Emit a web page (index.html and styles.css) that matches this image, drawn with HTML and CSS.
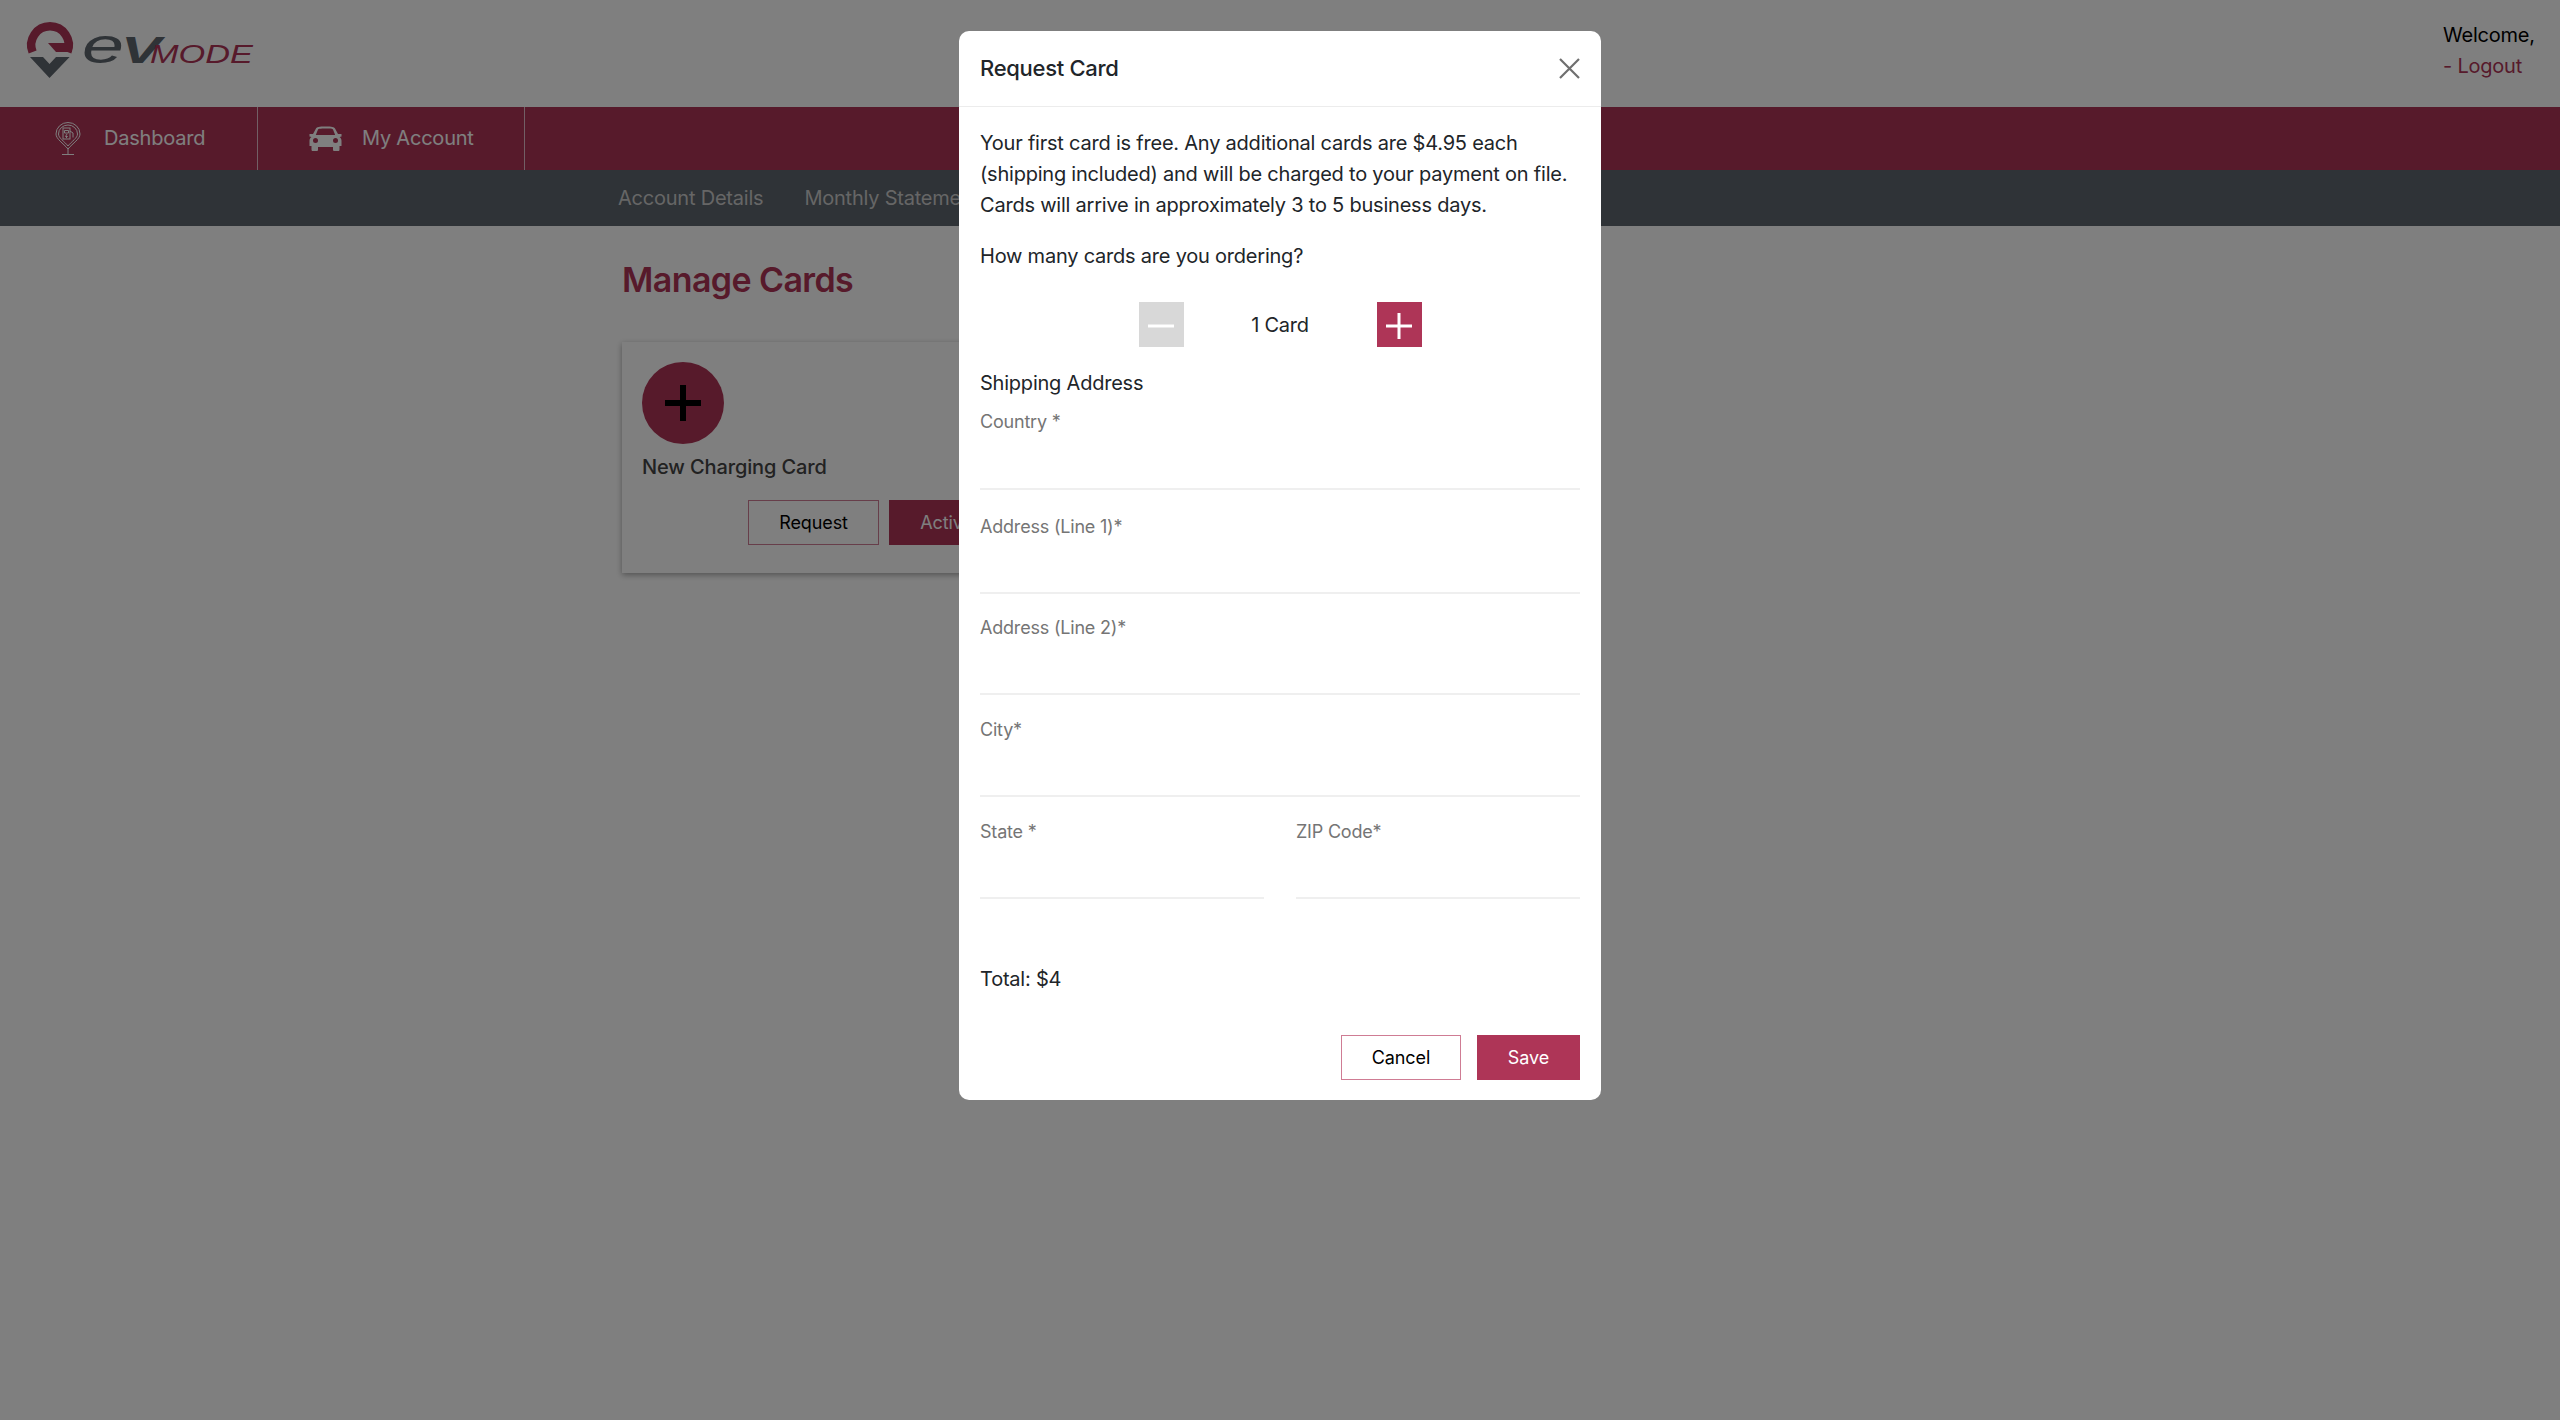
FILE: index.html
```html
<!DOCTYPE html>
<html lang="en">
<head>
<meta charset="utf-8">
<title>Manage Cards</title>
<link rel="stylesheet" href="styles.css">
</head>
<body>
<header class="topbar">
  <svg class="logo" width="230" height="60" viewBox="0 0 230 60" aria-label="EVmode">
    <path d="M5.600 30A18.750 18.750 0 1 1 40.400 30" fill="none" stroke="#ae3557" stroke-width="8.500"/>
    <path d="M21 21H45V30H29Z" fill="#ae3557"/>
    <path d="M3 35H16L22.500 42L29 35H42.600L22.500 56Z" fill="#5e666e"/>
    <text class="logo-e" x="55" y="41" textLength="42" lengthAdjust="spacingAndGlyphs">e</text>
    <text class="logo-v" x="94" y="41" textLength="40" lengthAdjust="spacingAndGlyphs">V</text>
    <text class="logo-mode" x="123" y="41" textLength="103" lengthAdjust="spacingAndGlyphs">mode</text>
  </svg>
  <div class="welcome">
    <div>Welcome,</div>
    <div class="logout">- Logout</div>
  </div>
</header>

<nav class="mainnav">
  <a class="mainnav-item item-dash">
    <svg width="26" height="33" viewBox="0 0 26 33" fill="none" stroke="#fff" stroke-width="1">
      <path d="M13 27C8 21 1 17 1 12A12 11.500 0 0 1 25 12C25 17 18 21 13 27Z"/>
      <path d="M13 24C9 19 3.500 16 3.500 12A9.500 9 0 0 1 22.500 12C22.500 16 17 19 13 24Z"/>
      <path d="M13 27V32M7 32.500H19"/>
      <rect x="8" y="6" width="7" height="11"/>
      <path d="M9.500 8.500H13.500V11H9.500ZM12 12L10.500 14.500H12.500L11 16M15 9L18 11V15.500"/>
    </svg>
    <span>Dashboard</span>
  </a>
  <a class="mainnav-item item-account">
    <svg width="33" height="25" viewBox="0 0 33 25" fill="#fff">
      <path d="M7 2.500C8 1 10 .5 16.500 .5S25 1 26 2.500L29 8H32.500V10.500L30.500 11C32 12 32.500 13 32.500 15V20H30.500V23.500C30.500 24.500 30 25 29 25H25.500C24.500 25 24 24.500 24 23.500V21H9V23.500C9 24.500 8.500 25 7.500 25H4C3 25 2.500 24.500 2.500 23.500V20H.5V15C.5 13 1 12 2.500 11L.5 10.500V8H4ZM9 3.500L6.800 9H26.200L24 3.500C23.500 2.800 22 2.500 16.500 2.500S9.500 2.800 9 3.500Z" fill-rule="evenodd"/>
      <circle cx="6.500" cy="14.500" r="2.500" fill="#ae3557"/>
      <circle cx="26.500" cy="14.500" r="2.500" fill="#ae3557"/>
    </svg>
    <span>My Account</span>
  </a>
</nav>

<nav class="subnav">
  <div class="subnav-inner">
    <a>Account Details</a>
    <a>Monthly Statements</a>
  </div>
</nav>

<main class="content">
  <h1 class="page-title">Manage Cards</h1>
  <section class="card">
    <div class="card-add">
      <svg width="36" height="36" viewBox="0 0 36 36"><path d="M18 0V36M0 18H36" stroke="#000" stroke-width="6"/></svg>
    </div>
    <div class="card-title">New Charging Card</div>
    <div class="card-actions">
      <button class="btn btn-outline btn-wide">Request</button>
      <button class="btn btn-fill btn-wide">Activate</button>
    </div>
  </section>
</main>

<div class="overlay">
  <div class="modal">
    <div class="modal-head">
      <span class="modal-title">Request Card</span>
      <svg width="21" height="21" viewBox="0 0 21 21"><path d="M1 1L20 20M20 1L1 20" stroke="#6f6f6f" stroke-width="2.200"/></svg>
    </div>
    <div class="modal-body">
      <p class="copy">Your first card is free. Any additional cards are $4.95 each (shipping included) and will be charged to your payment on file. Cards will arrive in approximately 3 to 5 business days.</p>
      <p class="question">How many cards are you ordering?</p>
      <div class="stepper">
        <span class="step step-off"><svg width="26" height="26" viewBox="0 0 26 26"><path d="M0 13H26" stroke="#fff" stroke-width="3"/></svg></span>
        <span class="step-count">1 Card</span>
        <span class="step step-on"><svg width="26" height="26" viewBox="0 0 26 26"><path d="M13 0V26M0 13H26" stroke="#fff" stroke-width="3"/></svg></span>
      </div>
      <div class="section-label">Shipping Address</div>
      <div class="field field-first"><label>Country *</label></div>
      <div class="field field-second"><label>Address (Line 1)*</label></div>
      <div class="field"><label>Address (Line 2)*</label></div>
      <div class="field"><label>City*</label></div>
      <div class="field-row">
        <div class="field"><label>State *</label></div>
        <div class="field"><label>ZIP Code*</label></div>
      </div>
      <div class="total">Total: $4</div>
      <div class="modal-actions">
        <button class="btn btn-outline btn-cancel">Cancel</button>
        <button class="btn btn-fill">Save</button>
      </div>
    </div>
  </div>
</div>
</body>
</html>
```

FILE: styles.css
```css
* { box-sizing: border-box; }
html, body { height: 100%; }
body {
  margin: 0;
  background: #fff;
  color: #000;
  font-family: Inter, "Liberation Sans", sans-serif;
  font-size: 20px;
  line-height: 31px;
  letter-spacing: -0.22px;
}
p { margin: 0; }

.topbar {
  height: 107px;
  display: flex;
  justify-content: space-between;
  padding: 22px 20px 0 27px;
}
.logo { display: block; overflow: visible; }
.logo text { letter-spacing: 0; }
.logo-e { font: italic 400 50px "Liberation Sans", sans-serif; fill: #5e666e; }
.logo-v { font: italic 700 36px "Liberation Sans", sans-serif; fill: #5e666e; }
.logo-mode { font: italic 400 25px "Liberation Sans", sans-serif; fill: #ae3557; text-transform: uppercase; }
.welcome { width: 97px; margin-top: -2px; }
.logout { color: #ae3557; }

.mainnav {
  height: 63px;
  background: #ae3557;
  display: flex;
  color: #fff;
}
.mainnav-item {
  display: flex;
  align-items: center;
  border-right: 1px solid #e5bfca;
}
.item-dash { width: 258px; padding-left: 55px; gap: 23px; }
.item-account { width: 267px; padding-left: 51px; gap: 20px; }

.subnav { height: 56px; background: #5e666e; color: #ccc; }
.subnav-inner {
  width: 1324px;
  margin: 0 auto;
  height: 100%;
  display: flex;
  align-items: center;
  gap: 41px;
  white-space: nowrap;
}

.content { width: 1316px; margin: 0 auto; }
.page-title {
  margin: 32px 0 40px;
  font-size: 34px;
  line-height: 44px;
  font-weight: 600;
  letter-spacing: -0.6px;
  color: #ae3557;
}
.card {
  width: 418px;
  height: 231px;
  padding: 20px;
  box-shadow: 0 2px 6px rgba(0,0,0,.35);
  background: #fff;
}
.card-add {
  width: 82px;
  height: 82px;
  border-radius: 50%;
  background: #ae3557;
  display: flex;
  align-items: center;
  justify-content: center;
}
.card-title { margin-top: 8px; font-weight: 500; color: #444; letter-spacing: -0.12px; }
.card-actions { display: flex; justify-content: flex-end; gap: 10px; margin-top: 17px; }

.btn {
  height: 45px;
  width: 103px;
  border: 0;
  padding: 0;
  font-family: inherit;
  font-size: 18px;
  font-weight: 400;
  letter-spacing: -0.1px;
}
.btn-fill { background: #ae3557; color: #fff; }
.btn-outline { background: #fff; color: #000; border: 1px solid #cf7c94; }
.btn-wide { width: 131px; }
.btn-cancel { width: 120px; }

.overlay {
  position: fixed;
  inset: 0;
  background: rgba(0,0,0,.5);
  display: flex;
  justify-content: center;
  align-items: flex-start;
  padding-top: 31px;
}
.modal {
  width: 642px;
  height: 1069px;
  background: #fff;
  border-radius: 10px;
  color: #212529;
}
.modal-head {
  height: 76px;
  padding: 0 21px;
  display: flex;
  align-items: center;
  justify-content: space-between;
  border-bottom: 1px solid #ececec;
}
.modal-title { font-size: 22px; font-weight: 500; letter-spacing: -0.3px; }
.modal-body { padding: 21px 21px 0; }
.question { margin-top: 20px; }
.stepper {
  margin-top: 30px;
  height: 45px;
  display: flex;
  justify-content: center;
  align-items: center;
}
.step {
  width: 45px;
  height: 45px;
  display: flex;
  align-items: center;
  justify-content: center;
  padding-top: 2px;
}
.step-off { background: #d8d8d8; }
.step-on { background: #ae3557; }
.step-count { width: 193px; text-align: center; padding-top: 2px; }
.section-label { margin-top: 21px; }

.field { height: 102px; }
.field::after {
  content: "";
  display: block;
  height: 2px;
  background: #efefef;
  margin-top: 53px;
}
.field label {
  display: block;
  height: 24px;
  font-size: 18px;
  line-height: 24px;
  letter-spacing: -0.2px;
  color: #757575;
}
.field-first { margin-top: 11px; height: 105px; }
.field-first::after { margin-top: 54px; }
.field-second { height: 101px; }
.field-row {
  display: grid;
  grid-template-columns: 284px 284px;
  gap: 32px;
}
.total { margin-top: 42px; }
.modal-actions {
  margin-top: 40px;
  display: flex;
  justify-content: flex-end;
  gap: 16px;
}
```
